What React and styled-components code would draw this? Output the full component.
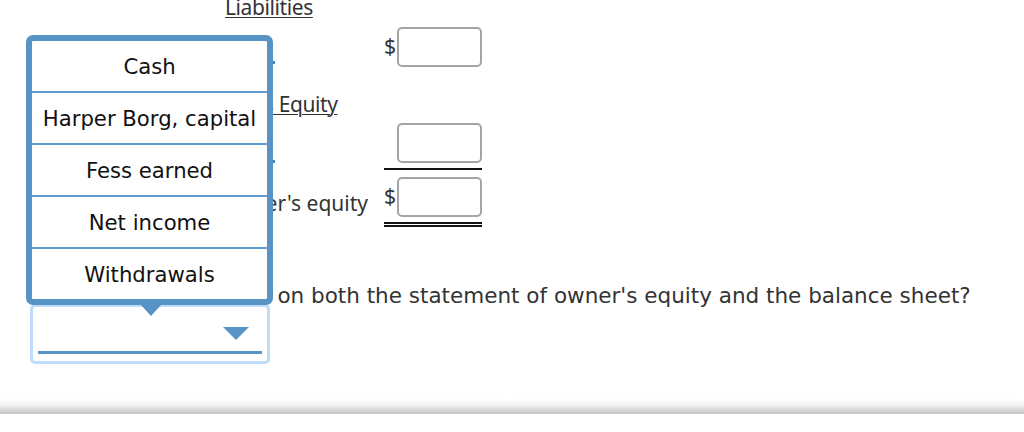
import styled, { createGlobalStyle } from "styled-components";

const GlobalStyle = createGlobalStyle`
  html, body {
    margin: 0;
    padding: 0;
    background: #fff;
  }
`;

const options = [
  "Cash",
  "Harper Borg, capital",
  "Fess earned",
  "Net income",
  "Withdrawals",
];

export default function App() {
  return (
    <>
      <GlobalStyle />
      <Page>
        <Sheet>
          <Heading $indent={225}>
            <span>Liabilities</span>
          </Heading>

          <Row $gap={8}>
            <RowSelect>
              <Notch $top={34} />
            </RowSelect>
            <Amount>
              <Dollar>$</Dollar>
              <Field />
            </Amount>
          </Row>

          <Heading $indent={195} $gap={25}>
            <span>Owner's Equity</span>
          </Heading>

          <Row $gap={7}>
            <RowSelect>
              <Notch $top={37} />
            </RowSelect>
            <Amount $rule="single">
              <Dollar />
              <Field />
            </Amount>
          </Row>

          <Row $gap={7}>
            <TotalLabel>Total liabilities and owner's equity</TotalLabel>
            <Amount $rule="double">
              <Dollar>$</Dollar>
              <Field />
            </Amount>
          </Row>

          <Question>
            <Lead>Which account appear</Lead>s on both the statement of
            owner's equity and the balance sheet?
          </Question>

          <Select>
            <Caret />
            <SelectRule />
          </Select>

          <Divider />
        </Sheet>

        <Menu>
          {options.map((label) => (
            <Option key={label}>{label}</Option>
          ))}
        </Menu>
      </Page>
    </>
  );
}

const Page = styled.div`
  position: relative;
  width: 1024px;
  height: 432px;
  overflow: hidden;
  background: #fff;
  font-family: "Noto Sans", "DejaVu Sans", sans-serif;
  font-size: 21px;
  color: #333;
`;

const Sheet = styled.div`
  display: flex;
  flex-direction: column;
  margin-top: -5px;
`;

const Heading = styled.div`
  height: 24px;
  line-height: 24px;
  margin-top: ${(p) => p.$gap || 0}px;
  padding-left: ${(p) => p.$indent}px;
  white-space: nowrap;
  letter-spacing: -0.4px;

  span {
    text-decoration: underline;
    text-decoration-thickness: 1px;
    text-underline-offset: 2px;
  }
`;

const Row = styled.div`
  display: grid;
  grid-template-columns: 384px 98px;
  margin-top: ${(p) => p.$gap || 0}px;
`;

const RowSelect = styled.div`
  position: relative;
  width: 245px;
  height: 40px;
  margin-left: 30px;
`;

const Notch = styled.span`
  position: absolute;
  right: 0;
  top: ${(p) => p.$top}px;
  width: 2px;
  height: 3px;
  background: #4a7fae;
`;

const Amount = styled.div`
  display: flex;
  align-items: center;
  padding-bottom: ${(p) => (p.$rule ? 5 : 0)}px;
  border-bottom: ${(p) =>
    p.$rule === "double"
      ? "5px double #111"
      : p.$rule === "single"
      ? "2px solid #111"
      : "none"};
`;

const Dollar = styled.span`
  width: 13px;
  line-height: 24px;
  margin-top: -2px;
`;

const Field = styled.div`
  width: 85px;
  height: 40px;
  box-sizing: border-box;
  border: 2px solid #a4a4a4;
  border-radius: 5px;
  background: #fff;
`;

const TotalLabel = styled.div`
  align-self: end;
  text-align: right;
  padding-right: 16px;
  line-height: 24px;
  margin-bottom: 12px;
  white-space: nowrap;
`;

const Question = styled.div`
  margin-top: 61px;
  padding-left: 42px;
  line-height: 16px;
  font-family: "DejaVu Sans", Verdana, sans-serif;
  font-size: 21.5px;
  white-space: nowrap;
`;

/* the opening words sit under the open menu */
const Lead = styled.span`
  letter-spacing: -1.2px;
`;

const Select = styled.div`
  display: flex;
  flex-direction: column;
  width: 240px;
  height: 60px;
  box-sizing: border-box;
  margin-left: 30px;
  padding: 20px 5px 7px;
  border: 3px solid #bddcf8;
  border-radius: 5px;
`;

const Caret = styled.span`
  align-self: flex-end;
  margin-right: 13px;
  width: 0;
  height: 0;
  border-left: 13px solid transparent;
  border-right: 13px solid transparent;
  border-top: 13px solid #5893c5;
`;

const SelectRule = styled.div`
  height: 3px;
  margin-top: 11px;
  background: #5893c5;
`;

const Divider = styled.div`
  height: 16px;
  margin-top: 34px;
  background: linear-gradient(#fff, #f4f4f4 40%, #c4c4c4);
`;

const Menu = styled.ul`
  position: absolute;
  left: 26px;
  top: 35px;
  width: 247px;
  box-sizing: border-box;
  margin: 0;
  padding: 0;
  list-style: none;
  background: #fff;
  border: 6px solid #5893c5;
  border-radius: 7px;

  &::after {
    content: "";
    position: absolute;
    left: 108px;
    top: calc(100% + 5px);
    border-left: 11px solid transparent;
    border-right: 11px solid transparent;
    border-top: 12px solid #5893c5;
  }
`;

const Option = styled.li`
  height: 48px;
  padding-top: 2px;
  line-height: 48px;
  text-align: center;
  font-family: "DejaVu Sans", Verdana, sans-serif;
  font-size: 21.2px;
  color: #111;
  border-bottom: 2px solid #5f9bce;

  &:last-child {
    border-bottom: none;
  }
`;
